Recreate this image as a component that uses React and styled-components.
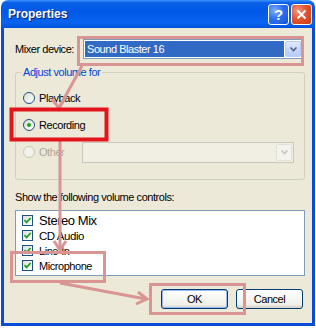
import styled, { createGlobalStyle } from 'styled-components';

const GlobalStyle = createGlobalStyle`
  html, body {
    margin: 0;
    padding: 0;
    background: #ffffff;
  }
  body {
    font-family: 'Liberation Sans', Arial, sans-serif;
    font-size: 11px;
    letter-spacing: -0.45px;
    color: #000;
  }
`;

const Stage = styled.div`
  position: relative;
  width: 316px;
  height: 328px;
  overflow: hidden;
`;

const Frame = styled.div`
  margin-left: 1px;
  width: 314px;
  height: 326px;
  display: flex;
  flex-direction: column;
`;

const TitleBar = styled.div`
  height: 28px;
  flex: 0 0 28px;
  box-sizing: border-box;
  display: flex;
  align-items: center;
  justify-content: space-between;
  padding: 0 3px 0 7px;
  border-radius: 7px 7px 0 0;
  background: linear-gradient(
    to bottom,
    #3d95ff 0%,
    #0a5fe8 10%,
    #0058e6 40%,
    #0864f0 80%,
    #0052dc 100%
  );
`;

const Title = styled.span`
  color: #fff;
  font-weight: 700;
  font-size: 12px;
  letter-spacing: 0;
  text-shadow: 1px 1px 0 #0a1c6b;
`;

const Controls = styled.div`
  display: flex;
  gap: 2px;
`;

const CtrlButton = styled.div`
  width: 21px;
  height: 21px;
  box-sizing: border-box;
  border: 1px solid #fff;
  border-radius: 3px;
  display: flex;
  align-items: center;
  justify-content: center;
  color: #fff;
  font-weight: 700;
  font-size: 15px;
  letter-spacing: 0;
  background: ${(p) =>
    p.$close
      ? 'radial-gradient(circle at 30% 30%, #f39a7c 0%, #e2552f 45%, #c93a12 100%)'
      : 'radial-gradient(circle at 30% 30%, #7fb0ff 0%, #2c6ff0 45%, #1a52d6 100%)'};
`;

const Body = styled.div`
  flex: 1;
  background: #ece9d8;
  border: 3px solid #0a4bd9;
  border-top: none;
  padding: 11px 7px 0 11px;
  display: flex;
  flex-direction: column;
`;

const MixerRow = styled.div`
  display: flex;
  align-items: center;
  height: 20px;
`;

const Label = styled.span`
  flex: 0 0 68px;
`;

const Select = styled.div`
  width: 220px;
  height: 20px;
  box-sizing: border-box;
  border: 1px solid #7f9db9;
  background: #fff;
  display: flex;
  align-items: stretch;
  padding: 1px;
  gap: 1px;
`;

const SelectValue = styled.div`
  flex: 1;
  background: ${(p) => (p.$disabled ? 'transparent' : '#316ac5')};
  color: #fff;
  padding-left: 2px;
  display: flex;
  align-items: center;
`;

const DropButton = styled.div`
  width: 16px;
  box-sizing: border-box;
  border-radius: 2px;
  border: 1px solid ${(p) => (p.$disabled ? '#e2e1d8' : '#b9cbf3')};
  background: ${(p) =>
    p.$disabled ? '#f4f3ee' : 'linear-gradient(to bottom, #dfe9fe, #b5cbf8)'};
  display: flex;
  align-items: center;
  justify-content: center;
`;

const GroupBox = styled.div`
  margin-top: 13px;
  height: 108px;
  box-sizing: border-box;
  border: 1px solid #d0d0bf;
  border-radius: 3px;
  display: flex;
  flex-direction: column;
`;

const Legend = styled.span`
  align-self: flex-start;
  margin: -7px 0 0 5px;
  padding: 0 2px;
  line-height: 13px;
  background: #ece9d8;
  color: #0046d5;
`;

const RadioList = styled.div`
  display: flex;
  flex-direction: column;
  gap: 7px;
  padding: 9px 10px 0 7px;
`;

const RadioRow = styled.div`
  display: flex;
  align-items: center;
  gap: 4px;
  height: 20px;
  color: ${(p) => (p.$disabled ? '#aca899' : '#000')};
`;

const RadioDot = styled.span`
  width: 12px;
  height: 12px;
  box-sizing: border-box;
  border-radius: 50%;
  border: 1px solid ${(p) => (p.$disabled ? '#cac8bb' : '#1c5180')};
  background: ${(p) =>
    p.$disabled ? '#f2f1ea' : 'linear-gradient(135deg, #dcdcd5, #ffffff)'};
  display: flex;
  align-items: center;
  justify-content: center;
  &::after {
    content: '';
    display: ${(p) => (p.$checked ? 'block' : 'none')};
    width: 4px;
    height: 4px;
    border-radius: 50%;
    background: #21a121;
  }
`;

const Combo = styled.div`
  margin-left: auto;
  width: 212px;
  height: 21px;
  box-sizing: border-box;
  border: 1px solid #c9c7ba;
  background: #f1efe4;
  display: flex;
  padding: 1px;
`;

const Caption = styled.div`
  margin-top: 11px;
  line-height: 13px;
`;

const ListBox = styled.div`
  margin-top: 6px;
  height: 66px;
  box-sizing: border-box;
  border: 1px solid #7f9db9;
  background: #fff;
  padding: 2px 0 0 6px;
  display: flex;
  flex-direction: column;
`;

const CheckItem = styled.div`
  height: 15px;
  display: flex;
  align-items: center;
  gap: 6px;
  font-size: ${(p) => p.$size || 11}px;
`;

const Box = styled.span`
  width: 11px;
  height: 11px;
  flex: 0 0 11px;
  box-sizing: border-box;
  border: 1px solid #1c5180;
  background: linear-gradient(135deg, #e0e0d8, #ffffff);
  display: flex;
  align-items: center;
  justify-content: center;
`;

const ButtonRow = styled.div`
  margin-top: 13px;
  display: flex;
  justify-content: flex-end;
  gap: 8px;
  padding-right: 2px;
`;

const Button = styled.div`
  width: 67px;
  height: 20px;
  box-sizing: border-box;
  border: 1px solid #003c74;
  border-radius: 3px;
  background: linear-gradient(to bottom, #ffffff, #f0f0ea 80%, #d6d0c5);
  box-shadow: ${(p) => (p.$default ? 'inset 0 0 0 1px #9bb8f0' : 'none')};
  display: flex;
  align-items: center;
  justify-content: center;
`;

const Overlay = styled.svg`
  position: absolute;
  top: 0;
  left: 0;
  pointer-events: none;
`;

const Arrow = () => (
  <svg width="9" height="6" viewBox="0 0 9 6">
    <path d="M1.5 1.5 L4.5 4.5 L7.5 1.5" fill="none" stroke="#4d6185" strokeWidth="1.6" />
  </svg>
);

const GrayArrow = () => (
  <svg width="9" height="6" viewBox="0 0 9 6">
    <path d="M1.5 1.5 L4.5 4.5 L7.5 1.5" fill="none" stroke="#c9c7ba" strokeWidth="1.6" />
  </svg>
);

const Check = () => (
  <svg width="9" height="9" viewBox="0 0 9 9">
    <path d="M1.5 4.2 L3.6 6.4 L7.6 2" fill="none" stroke="#21a121" strokeWidth="1.8" />
  </svg>
);

const pink = '#d99494';

const controls = [
  { name: 'Stereo Mix', size: 13 },
  { name: 'CD Audio', size: 11.5 },
  { name: 'Line-In', size: 11 },
  { name: 'Microphone', size: 11 },
];

export default function App() {
  return (
    <Stage>
      <GlobalStyle />
      <Frame>
        <TitleBar>
          <Title>Properties</Title>
          <Controls>
            <CtrlButton>?</CtrlButton>
            <CtrlButton $close>
              <svg width="11" height="11" viewBox="0 0 11 11">
                <path d="M1.5 1.5 L9.5 9.5 M9.5 1.5 L1.5 9.5" stroke="#fff" strokeWidth="2" />
              </svg>
            </CtrlButton>
          </Controls>
        </TitleBar>
        <Body>
          <MixerRow>
            <Label>Mixer device:</Label>
            <Select>
              <SelectValue>Sound Blaster 16</SelectValue>
              <DropButton>
                <Arrow />
              </DropButton>
            </Select>
          </MixerRow>

          <GroupBox>
            <Legend>Adjust volume for</Legend>
            <RadioList>
              <RadioRow>
                <RadioDot />
                Playback
              </RadioRow>
              <RadioRow>
                <RadioDot $checked />
                Recording
              </RadioRow>
              <RadioRow $disabled>
                <RadioDot $disabled />
                Other
                <Combo>
                  <SelectValue $disabled />
                  <DropButton $disabled>
                    <GrayArrow />
                  </DropButton>
                </Combo>
              </RadioRow>
            </RadioList>
          </GroupBox>

          <Caption>Show the following volume controls:</Caption>
          <ListBox>
            {controls.map((c) => (
              <CheckItem key={c.name} $size={c.size}>
                <Box>
                  <Check />
                </Box>
                {c.name}
              </CheckItem>
            ))}
          </ListBox>

          <ButtonRow>
            <Button $default>OK</Button>
            <Button>Cancel</Button>
          </ButtonRow>
        </Body>
      </Frame>

      <Overlay width="316" height="328" viewBox="0 0 316 328">
        <g fill="none" stroke={pink} strokeWidth="3">
          <rect x="78.5" y="37.5" width="224" height="27" />
          <rect x="11.5" y="252.5" width="93" height="29" />
          <rect x="150.5" y="284.5" width="94" height="29" />
          <path d="M82 66 L60 106" />
          <path d="M52 99 L59 108 L65 98" />
          <path d="M60 141 L60 249" />
          <path d="M54 241 L60 250 L66 241" />
          <path d="M60 283 L146 299" />
          <path d="M138 292 L147 299 L136 304" />
        </g>
        <rect x="11.5" y="109.5" width="95" height="30" fill="none" stroke="#e3141b" strokeWidth="4" />
      </Overlay>
    </Stage>
  );
}
